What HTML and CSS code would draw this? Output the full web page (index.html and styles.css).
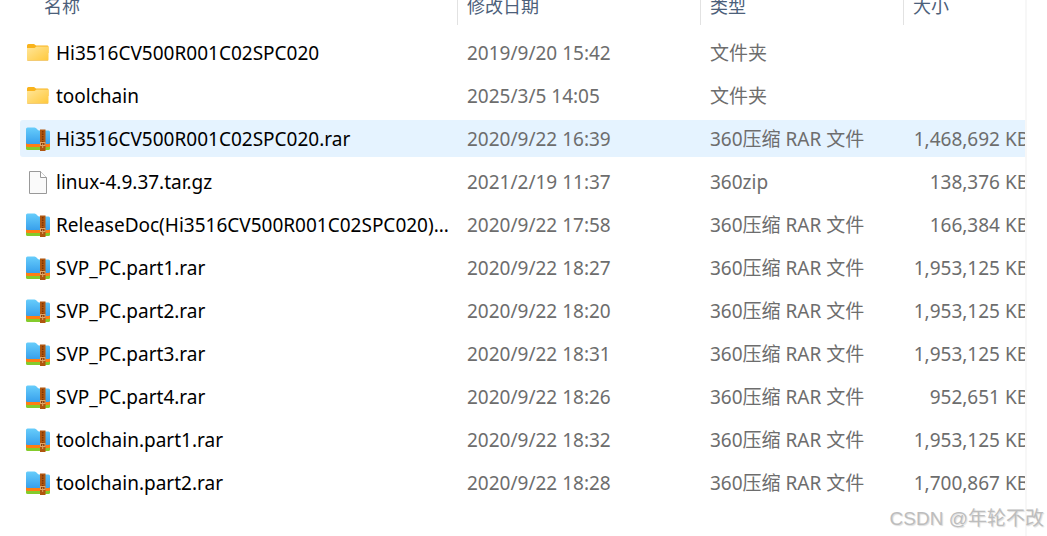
FILE: index.html
```html
<!DOCTYPE html>
<html lang="zh-CN">
<head>
    <meta charset="UTF-8">
    <meta name="viewport" content="width=device-width, initial-scale=1.0">
    <title>文件列表</title>
    <link rel="stylesheet" href="styles.css">
</head>
<body>
    <!-- 图标定义 -->
    <svg class="icon-defs" width="0" height="0" aria-hidden="true">
        <defs>
            <linearGradient id="folderFill" x1="0" y1="0" x2="1" y2="1">
                <stop offset="0" stop-color="#ffe69a"/>
                <stop offset="1" stop-color="#ffc83a"/>
            </linearGradient>
            <linearGradient id="rarFill" x1="0" y1="0" x2="0" y2="1">
                <stop offset="0" stop-color="#67cdfb"/>
                <stop offset="1" stop-color="#38a0ec"/>
            </linearGradient>
        </defs>
        <symbol id="folder" viewBox="0 0 24 24">
            <path d="M1 4.500Q1 3 2.500 3H8L10 4.500H21.500Q22.500 4.500 22.500 6V12H1Z" fill="#f9b31c"/>
            <path d="M1 7H8.500L10.500 5.500H22.500V18.500Q22.500 20 21 20H2.500Q1 20 1 18.500Z" fill="url(#folderFill)"/>
            <path d="M1.500 19.500H22" stroke="#f3cb74" stroke-width="1"/>
        </symbol>
        <symbol id="rar" viewBox="0 0 24 24">
            <path d="M0 17H24V21.500Q24 23 22.500 23H1.500Q0 23 0 21.500Z" fill="#84cb2c"/>
            <path d="M0 15H24V18.500Q24 20 22.500 20H1.500Q0 20 0 18.500Z" fill="#ff7d12"/>
            <path d="M0 2Q0 .5 1.500 .5H8.500Q10 .5 11 2T13.500 3.500H22.500Q24 3.500 24 5V15.500Q24 17 22.500 17H1.500Q0 17 0 15.500Z" fill="url(#rarFill)"/>
            <rect x="14" y="2.500" width="5.500" height="21.500" fill="#b0560f"/>
            <path d="M16.700 4V15" stroke="#7d3505" stroke-width="1.500" stroke-dasharray="1.500 1"/>
            <rect x="14.500" y="15.500" width="4.500" height="3" fill="#8a3b08" stroke="#e0a566"/>
            <path d="M16.700 16.500V21" stroke="#e0a566"/>
        </symbol>
        <symbol id="file" viewBox="0 0 24 24">
            <path d="M3.500 1.500H14.500L20.500 7.500V23.500H3.500Z" fill="#fafafa" stroke="#999"/>
            <path d="M14.500 1.500V7.500H20.500" fill="#fff" stroke="#999"/>
        </symbol>
    </svg>

    <main class="file-pane">
        <table class="file-list">
            <colgroup>
                <col class="col-name">
                <col class="col-date">
                <col class="col-type">
                <col class="col-size">
            </colgroup>
            <thead>
                <tr>
                    <th scope="col"><div class="head-label">名称</div></th>
                    <th scope="col"><div class="head-label">修改日期</div></th>
                    <th scope="col"><div class="head-label">类型</div></th>
                    <th scope="col"><div class="head-label">大小</div></th>
                </tr>
            </thead>
            <tbody>
                <tr>
                    <td><div class="file-name"><svg class="icon"><use href="#folder"/></svg><span>Hi3516CV500R001C02SPC020</span></div></td>
                    <td>2019/9/20 15:42</td>
                    <td>文件夹</td>
                    <td class="size"></td>
                </tr>
                <tr>
                    <td><div class="file-name"><svg class="icon"><use href="#folder"/></svg><span>toolchain</span></div></td>
                    <td>2025/3/5 14:05</td>
                    <td>文件夹</td>
                    <td class="size"></td>
                </tr>
                <tr class="selected">
                    <td><div class="file-name"><svg class="icon"><use href="#rar"/></svg><span>Hi3516CV500R001C02SPC020.rar</span></div></td>
                    <td>2020/9/22 16:39</td>
                    <td>360压缩 RAR 文件</td>
                    <td class="size">1,468,692 KB</td>
                </tr>
                <tr>
                    <td><div class="file-name"><svg class="icon"><use href="#file"/></svg><span>linux-4.9.37.tar.gz</span></div></td>
                    <td>2021/2/19 11:37</td>
                    <td>360zip</td>
                    <td class="size">138,376 KB</td>
                </tr>
                <tr>
                    <td><div class="file-name"><svg class="icon"><use href="#rar"/></svg><span>ReleaseDoc(Hi3516CV500R001C02SPC020)...</span></div></td>
                    <td>2020/9/22 17:58</td>
                    <td>360压缩 RAR 文件</td>
                    <td class="size">166,384 KB</td>
                </tr>
                <tr>
                    <td><div class="file-name"><svg class="icon"><use href="#rar"/></svg><span>SVP_PC.part1.rar</span></div></td>
                    <td>2020/9/22 18:27</td>
                    <td>360压缩 RAR 文件</td>
                    <td class="size">1,953,125 KB</td>
                </tr>
                <tr>
                    <td><div class="file-name"><svg class="icon"><use href="#rar"/></svg><span>SVP_PC.part2.rar</span></div></td>
                    <td>2020/9/22 18:20</td>
                    <td>360压缩 RAR 文件</td>
                    <td class="size">1,953,125 KB</td>
                </tr>
                <tr>
                    <td><div class="file-name"><svg class="icon"><use href="#rar"/></svg><span>SVP_PC.part3.rar</span></div></td>
                    <td>2020/9/22 18:31</td>
                    <td>360压缩 RAR 文件</td>
                    <td class="size">1,953,125 KB</td>
                </tr>
                <tr>
                    <td><div class="file-name"><svg class="icon"><use href="#rar"/></svg><span>SVP_PC.part4.rar</span></div></td>
                    <td>2020/9/22 18:26</td>
                    <td>360压缩 RAR 文件</td>
                    <td class="size">952,651 KB</td>
                </tr>
                <tr>
                    <td><div class="file-name"><svg class="icon"><use href="#rar"/></svg><span>toolchain.part1.rar</span></div></td>
                    <td>2020/9/22 18:32</td>
                    <td>360压缩 RAR 文件</td>
                    <td class="size">1,953,125 KB</td>
                </tr>
                <tr>
                    <td><div class="file-name"><svg class="icon"><use href="#rar"/></svg><span>toolchain.part2.rar</span></div></td>
                    <td>2020/9/22 18:28</td>
                    <td>360压缩 RAR 文件</td>
                    <td class="size">1,700,867 KB</td>
                </tr>
            </tbody>
        </table>
    </main>
    <div class="watermark">CSDN @年轮不改</div>
</body>
</html>
```

FILE: styles.css
```css
* {
    margin: 0;
    padding: 0;
    box-sizing: border-box;
}

body {
    font-family: "Noto Sans", "Noto Sans CJK SC", sans-serif;
    font-size: 19px;
    line-height: 35px;
    color: #6d6d6d;
    background: white;
    overflow: hidden;
}

.icon-defs {
    position: absolute;
}

.file-pane {
    min-height: 100vh;
    margin-right: 20px;
    padding-left: 20px;
    border-right: 2px solid #f7f7f7;
    overflow: hidden;
}

/* 列表向上滚动了一点，表头只露出下半部分；大小列略超出右边界 */
.file-list {
    width: calc(100% + 4px);
    margin-top: -18px;
    table-layout: fixed;
    border-collapse: separate;
    border-spacing: 0 6px;
}

.col-name {
    width: 437px;
}

.col-date {
    width: 243px;
}

.col-type {
    width: 203px;
}

th {
    padding-bottom: 3px;
    font-size: 18px;
    line-height: 37px;
    font-weight: normal;
    text-align: left;
    color: #4c607a;
}

.head-label {
    padding-left: 9px;
    border-left: 1px solid #e2e2e2;
}

th:first-child .head-label {
    padding-left: 24px;
    border-left: none;
}

td {
    height: 37px;
    padding-top: 2px;
    padding-left: 10px;
    white-space: nowrap;
}

td:first-child {
    padding-left: 6px;
}

.file-name {
    display: flex;
    align-items: center;
    gap: 6px;
    color: #000;
}

.icon {
    width: 24px;
    height: 24px;
    margin-bottom: 2px;
    flex-shrink: 0;
}

td.size {
    text-align: right;
}

.selected td {
    background: #e5f3ff;
}

.selected td:first-child {
    border-radius: 3px 0 0 3px;
}

.watermark {
    position: absolute;
    right: 3px;
    bottom: 0;
    font-family: "Liberation Sans", "Noto Sans CJK SC", sans-serif;
    color: #bdbdbd;
    text-shadow: 1px 1px 1px #ddd;
}
```
